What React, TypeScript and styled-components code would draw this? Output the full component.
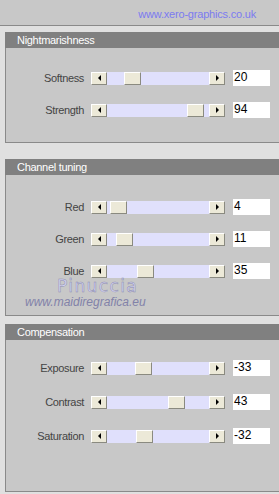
import React from 'react';
import styled, { createGlobalStyle } from 'styled-components';

const GlobalStyle = createGlobalStyle`
  html, body {
    margin: 0;
    padding: 0;
    background: #e0e0e0;
    overflow: hidden;
  }
  body {
    font-family: "Liberation Sans", Arial, sans-serif;
  }
`;

//#region Styled
const Page = styled.div`
  width: 279px;
  height: 494px;
  display: flex;
  flex-direction: column;
  background: #e0e0e0;
`;

const TopBar = styled.div`
  height: 25px;
  border-bottom: 1px solid #8a8a8a;
  background: #c8c8c8;
  display: flex;
  align-items: center;
  justify-content: flex-end;
  padding-right: 23px;
`;

const SiteLink = styled.span`
  font-size: 11px;
  letter-spacing: -0.2px;
  color: #7b7bf0;
  padding-top: 2px;
`;

const Panel = styled.section<{ $top: number }>`
  margin: ${(p) => p.$top}px 0 0 5px;
  position: relative;
`;

const Header = styled.div`
  height: 16px;
  background: #808080;
  color: #ffffff;
  font-size: 11px;
  letter-spacing: -0.3px;
  line-height: 16px;
  padding-left: 12px;
`;

const Body = styled.div<{ $padTop: number; $padBottom: number; $gap: number }>`
  background: #c8c8c8;
  border-left: 1px solid #8a8a8a;
  border-bottom: 1px solid #8a8a8a;
  padding: ${(p) => p.$padTop}px 0 ${(p) => p.$padBottom}px 0;
  display: flex;
  flex-direction: column;
  gap: ${(p) => p.$gap}px;
`;

const Row = styled.div`
  display: flex;
  align-items: center;
  height: 16px;
`;

const Label = styled.div`
  width: 78px;
  text-align: right;
  font-size: 11px;
  letter-spacing: -0.35px;
  color: #444444;
  margin-right: 7px;
`;

const Slider = styled.div`
  display: flex;
  height: 13px;
`;

const ArrowButton = styled.div`
  width: 16px;
  height: 13px;
  box-sizing: border-box;
  background: #ece9d8;
  border-top: 1px solid #ffffff;
  border-left: 1px solid #ffffff;
  border-right: 1px solid #8a8a80;
  border-bottom: 1px solid #8a8a80;
  display: flex;
  align-items: center;
  justify-content: center;
`;

const Arrow = styled.div<{ $dir: 'left' | 'right' }>`
  width: 0;
  height: 0;
  border-top: 3px solid transparent;
  border-bottom: 3px solid transparent;
  ${(p) =>
    p.$dir === 'left'
      ? 'border-right: 3px solid #000;'
      : 'border-left: 3px solid #000;'}
`;

const Track = styled.div`
  width: 102px;
  height: 13px;
  background: #e0e0fc;
  position: relative;
`;

const Thumb = styled.div`
  position: absolute;
  top: 0;
  width: 17px;
  height: 13px;
  box-sizing: border-box;
  background: #ece9d8;
  border-top: 1px solid #ffffff;
  border-left: 1px solid #ffffff;
  border-right: 1px solid #8a8a80;
  border-bottom: 1px solid #8a8a80;
`;

const ValueBox = styled.div`
  width: 37px;
  height: 16px;
  margin-left: 8px;
  background: #ffffff;
  color: #000;
  font-size: 12px;
  line-height: 14px;
  padding-left: 1px;
  box-sizing: border-box;
`;

const Watermark = styled.div`
  position: absolute;
  left: 20px;
  top: 118px;
  display: flex;
  flex-direction: column;
  align-items: flex-start;
  pointer-events: none;
`;

const WatermarkName = styled.span`
  margin-left: 32px;
  font-family: "DejaVu Sans", sans-serif;
  font-size: 17px;
  line-height: 18px;
  letter-spacing: 1.4px;
  color: #d4d4f2;
  -webkit-text-stroke: 0.5px #8c8cae;
`;

const WatermarkUrl = styled.span`
  font-size: 12px;
  font-style: italic;
  line-height: 14px;
  color: #8282a8;
`;
//#endregion

interface Control {
  label: string;
  value: number;
}

interface Section {
  title: string;
  top: number;
  padTop: number;
  padBottom: number;
  gap: number;
  min: number;
  max: number;
  controls: Control[];
  watermark?: boolean;
}

const sections: Section[] = [
  {
    title: 'Nightmarishness',
    top: 6,
    padTop: 22,
    padBottom: 24,
    gap: 16,
    min: 0,
    max: 100,
    controls: [
      { label: 'Softness', value: 20 },
      { label: 'Strength', value: 94 },
    ],
  },
  {
    title: 'Channel tuning',
    top: 16,
    padTop: 24,
    padBottom: 36,
    gap: 16,
    min: 0,
    max: 100,
    controls: [
      { label: 'Red', value: 4 },
      { label: 'Green', value: 11 },
      { label: 'Blue', value: 35 },
    ],
    watermark: true,
  },
  {
    title: 'Compensation',
    top: 8,
    padTop: 20,
    padBottom: 47,
    gap: 18,
    min: -100,
    max: 100,
    controls: [
      { label: 'Exposure', value: -33 },
      { label: 'Contrast', value: 43 },
      { label: 'Saturation', value: -32 },
    ],
  },
];

const SliderRow = ({ control, min, max }: { control: Control; min: number; max: number }) => {
  const pos = Math.round(((control.value - min) / (max - min)) * (102 - 17));
  return (
    <Row>
      <Label>{control.label}</Label>
      <Slider>
        <ArrowButton>
          <Arrow $dir="left" />
        </ArrowButton>
        <Track>
          <Thumb style={{ left: pos }} />
        </Track>
        <ArrowButton>
          <Arrow $dir="right" />
        </ArrowButton>
      </Slider>
      <ValueBox>{control.value}</ValueBox>
    </Row>
  );
};

export default function App() {
  return (
    <Page>
      <GlobalStyle />
      <TopBar>
        <SiteLink>www.xero-graphics.co.uk</SiteLink>
      </TopBar>
      {sections.map((s) => (
        <Panel key={s.title} $top={s.top}>
          <Header>{s.title}</Header>
          <Body $padTop={s.padTop} $padBottom={s.padBottom} $gap={s.gap}>
            {s.controls.map((c) => (
              <SliderRow key={c.label} control={c} min={s.min} max={s.max} />
            ))}
          </Body>
          {s.watermark && (
            <Watermark>
              <WatermarkName>Pinuccia</WatermarkName>
              <WatermarkUrl>www.maidiregrafica.eu</WatermarkUrl>
            </Watermark>
          )}
        </Panel>
      ))}
    </Page>
  );
}
